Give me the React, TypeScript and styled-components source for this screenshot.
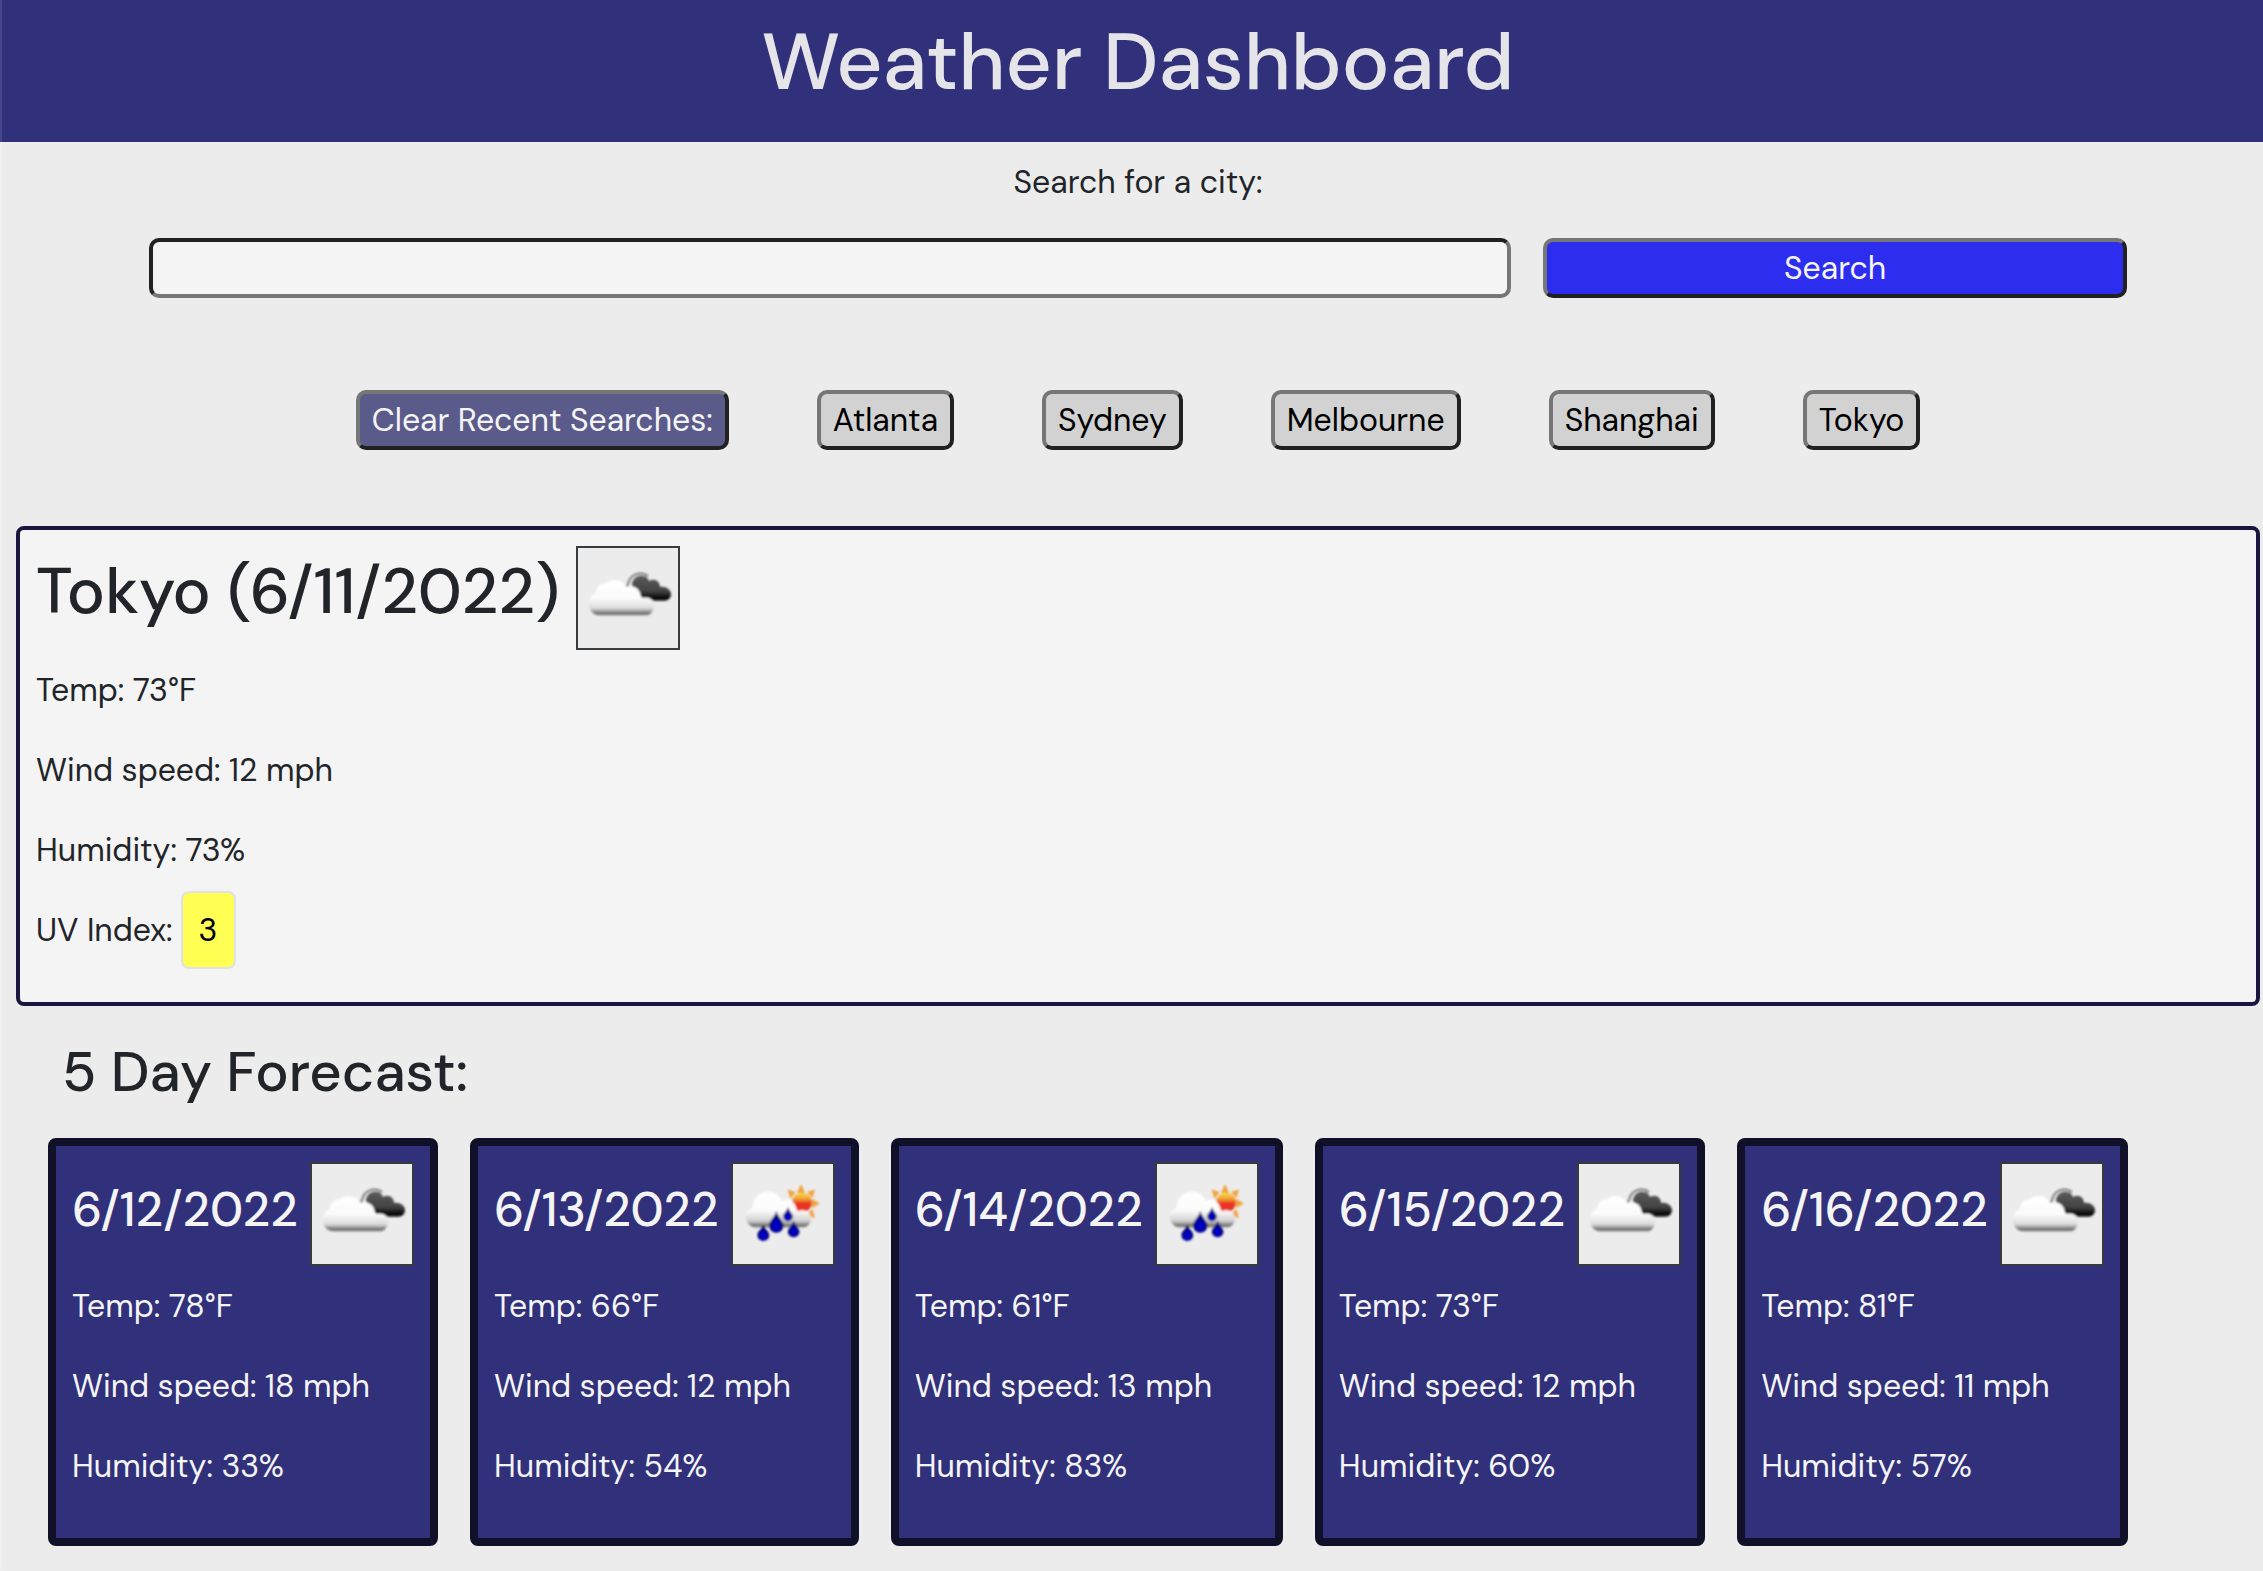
import React from "react";
import styled, { createGlobalStyle } from "styled-components";

const color = {
  navy: "#31307a",
  page: "#ececec",
  panel: "#f4f4f4",
  text: "#212529",
  light: "#f4f4f4",
  bevelDark: "#212121",
  bevelLight: "#767676",
};

const GlobalStyle = createGlobalStyle`
  *, *::before, *::after { box-sizing: border-box; }
  body {
    margin: 0;
    background: ${color.page};
    color: ${color.text};
    font-family: "DM Sans", Inter, "Open Sans", sans-serif;
    font-size: 32px;
    line-height: 48px;
  }
  h1, h2, h3, p { margin: 0; font-weight: 500; }
  button, input { font: inherit; }
`;

const Header = styled.header`
  padding: 14px 0 32px 11px;
  border-left: 2px solid #46458a;
  background: ${color.navy};
  text-align: center;
`;

const PageTitle = styled.h1`
  color: #e5e4e9;
  font-size: 80px;
  line-height: 96px;
`;

const Main = styled.main`
  padding: 16px 3px 24px 14px;
  border-left: 2px solid #f0f0f0;
`;

const SearchForm = styled.form`
  display: grid;
  grid-template-columns: 7fr 3fr;
  gap: 32px;
  margin: 0 133px;
`;

const SearchLabel = styled.label`
  grid-column: 1 / -1;
  text-align: center;
`;

const SearchInput = styled.input`
  width: 100%;
  min-width: 0;
  height: 60px;
  padding: 0 12px;
  border: 4px solid;
  border-color: ${color.bevelDark} ${color.bevelLight} ${color.bevelLight} ${color.bevelDark};
  border-radius: 10px;
  background: ${color.panel};
  color: ${color.text};
`;

const Button = styled.button<{ $tone: "primary" | "muted" | "plain" }>`
  height: 60px;
  padding: 0 12px;
  border: 4px solid;
  border-color: ${color.bevelLight} ${color.bevelDark} ${color.bevelDark} ${color.bevelLight};
  border-radius: 10px;
  background: ${(p) => ({ primary: "#2d2df0", muted: "#5b5b8b", plain: "#d2d2d2" })[p.$tone]};
  color: ${(p) => (p.$tone === "plain" ? "#000" : color.light)};
  line-height: 52px;
  cursor: pointer;
`;

const RecentSearches = styled.nav`
  display: flex;
  flex-wrap: wrap;
  justify-content: center;
  gap: 24px 88px;
  margin: 92px 0 76px;
`;

const CurrentPanel = styled.section`
  padding: 16px 16px 48px;
  border: 4px solid #19173f;
  border-radius: 8px;
  background: ${color.panel};
`;

const PanelHeader = styled.div`
  display: flex;
  align-items: flex-start;
  gap: 16px;
  margin-bottom: 16px;
`;

const CityTitle = styled.h2`
  font-size: 64px;
  line-height: 92px;
  white-space: nowrap;
`;

const IconFrame = styled.svg`
  flex: none;
  width: 104px;
  height: 104px;
  border: 2px solid #373b3e;
  background: ${color.page};
`;

const Readings = styled.div`
  display: flex;
  flex-direction: column;
  gap: 32px;
`;

const Reading = styled.p`
  display: flex;
  align-items: center;
  gap: 8px;
  height: 48px;
  font-weight: 400;
  white-space: nowrap;
`;

const UvBadge = styled.span`
  padding: 13px 16px;
  border: 2px solid #dee2e6;
  border-radius: 8px;
  background: #ffff54;
  color: #000;
`;

const Forecast = styled.section`
  margin: 32px 32px 0;
`;

const ForecastTitle = styled.h2`
  margin: 0 0 32px;
  padding-left: 14px;
  font-size: 56px;
  line-height: 68px;
`;

const CardRow = styled.div`
  display: flex;
  flex-wrap: wrap;
  gap: 32px;
`;

const Card = styled.article`
  padding: 16px 16px 48px;
  border: 8px solid #101028;
  border-radius: 8px;
  background: ${color.navy};
  color: ${color.light};
`;

const CardHeader = styled(PanelHeader)`
  gap: 12px;
`;

const CardDate = styled.h3`
  font-size: 48px;
  line-height: 96px;
`;

function CloudsIcon() {
  const id = React.useId();
  return (
    <IconFrame viewBox="0 0 100 100" role="img" aria-label="Broken clouds">
      <defs>
        <linearGradient id={`${id}w`} gradientUnits="userSpaceOnUse" x1="0" y1="32" x2="0" y2="68">
          <stop offset="0" stopColor="#fff" />
          <stop offset="0.5" stopColor="#fbfbfb" />
          <stop offset="0.78" stopColor="#dcdcdc" />
          <stop offset="0.86" stopColor="#a5a5a5" />
          <stop offset="0.93" stopColor="#6c6c6c" />
          <stop offset="1" stopColor="#a8a8a8" />
        </linearGradient>
        <linearGradient id={`${id}d`} gradientUnits="userSpaceOnUse" x1="0" y1="28" x2="0" y2="53">
          <stop offset="0" stopColor="#5a5a5a" />
          <stop offset="0.6" stopColor="#444" />
          <stop offset="0.9" stopColor="#050505" />
          <stop offset="1" stopColor="#444" />
        </linearGradient>
        <filter id={`${id}s`} x="-10%" y="-10%" width="120%" height="120%">
          <feGaussianBlur stdDeviation="0.9" />
        </filter>
      </defs>
      <g filter={`url(#${id}s)`}>
        <path d="M47 39C50 39 50 36 51 33C54 26 63 23 70 28" fill="none" stroke="#858585" strokeWidth="2.2" />
        <path
          d="M54 36C55 29 61 27 65 28C68 28 70 30 71 33C76 30 82 33 82 39C88 38 93 42 93 46C93 50 90 53 86 53H68L55 41Z"
          fill={`url(#${id}d)`}
        />
        <path
          d="M21 67.5C15 67 11 62 11 56C11 51 13 47 18 45C18 39 23 35 28 35C32 31 41 31 45 35C48 38 48 39 51 39C58 37 63 43 63 50C70 48 76 51 76 57C76 62 73 67 69 67.5Z"
          fill={`url(#${id}w)`}
        />
      </g>
    </IconFrame>
  );
}

const SUN_RAYS = [
  "M64 29L68 20L72 29Z",
  "M57.5 35L54.5 25.5L62.5 28Z",
  "M74 28L82 25.5L79.5 34Z",
  "M79 35L87 39.5L79 44Z",
  "M79.5 45L82 54.5L73.5 50.5Z",
];

const RAINDROPS = [
  "M43.3 47C44.8 53 50.6 57 50.6 61.5A7.3 7.3 0 0 1 36 61.5C36 57 42 53 43.3 47Z",
  "M55 43C56 47 59.8 49.5 59.8 52.5A4.8 4.8 0 0 1 50.2 52.5C50.2 49.5 54 47 55 43Z",
  "M30.3 60C31.500 65 36.2 67.5 36.2 71.200A5.9 5.9 0 0 1 24.4 71.200C24.4 67.5 29 65 30.3 60Z",
  "M60.700 56.500C62 61 66.5 64 66.5 68A5.9 5.9 0 0 1 54.8 68C54.8 64 59.500 61 60.700 56.500Z",
];

function SunRainIcon() {
  const id = React.useId();
  return (
    <IconFrame viewBox="0 0 100 100" role="img" aria-label="Rain with sun">
      <defs>
        <linearGradient id={`${id}s`} x1="0" y1="0" x2="0" y2="1">
          <stop offset="0.08" stopColor="#f8d24c" />
          <stop offset="0.35" stopColor="#f0962f" />
          <stop offset="0.55" stopColor="#ea3323" />
          <stop offset="1" stopColor="#e8301f" />
        </linearGradient>
        <linearGradient id={`${id}w`} gradientUnits="userSpaceOnUse" x1="0" y1="28" x2="0" y2="64">
          <stop offset="0" stopColor="#fff" />
          <stop offset="0.5" stopColor="#fcfcfc" />
          <stop offset="0.8" stopColor="#d2d2d2" />
          <stop offset="0.94" stopColor="#6e6e6e" />
          <stop offset="1" stopColor="#aaa" />
        </linearGradient>
        <radialGradient id={`${id}r`} cx="0.5" cy="0.68" r="0.55">
          <stop offset="0" stopColor="#0000d8" />
          <stop offset="0.45" stopColor="#0000b0" />
          <stop offset="1" stopColor="#00004c" />
        </radialGradient>
        <filter id={`${id}b`} x="-10%" y="-10%" width="120%" height="120%">
          <feGaussianBlur stdDeviation="0.8" />
        </filter>
      </defs>
      <g filter={`url(#${id}b)`}>
        {SUN_RAYS.map((d) => (
          <path key={d} d={d} fill="#f0a33c" />
        ))}
        <circle cx="69" cy="38.500" r="10" fill={`url(#${id}s)`} />
        <path
          d="M21 63.500C16 62 12.500 57 12.500 52C13 48 17 46 20 43C20 35 25 28 34 28C41 27 46 31 49 37C55 34 60 36 62.500 42C64 46 64 48 67 46.500C74 45 78 50 78 55C78 59 75 63 70 63.500Z"
          fill={`url(#${id}w)`}
        />
        {RAINDROPS.map((d) => (
          <path key={d} d={d} fill={`url(#${id}r)`} />
        ))}
      </g>
    </IconFrame>
  );
}

const cities = ["Atlanta", "Sydney", "Melbourne", "Shanghai", "Tokyo"];

const forecast = [
  { date: "6/12/2022", Icon: CloudsIcon, temp: 78, wind: 18, humidity: 33 },
  { date: "6/13/2022", Icon: SunRainIcon, temp: 66, wind: 12, humidity: 54 },
  { date: "6/14/2022", Icon: SunRainIcon, temp: 61, wind: 13, humidity: 83 },
  { date: "6/15/2022", Icon: CloudsIcon, temp: 73, wind: 12, humidity: 60 },
  { date: "6/16/2022", Icon: CloudsIcon, temp: 81, wind: 11, humidity: 57 },
];

export default function App() {
  return (
    <>
      <GlobalStyle />
      <Header>
        <PageTitle>Weather Dashboard</PageTitle>
      </Header>
      <Main>
        <SearchForm onSubmit={(e) => e.preventDefault()}>
          <SearchLabel htmlFor="city">Search for a city:</SearchLabel>
          <SearchInput id="city" type="text" />
          <Button $tone="primary" type="submit">
            Search
          </Button>
        </SearchForm>

        <RecentSearches aria-label="Recent searches">
          <Button $tone="muted" type="button">
            Clear Recent Searches:
          </Button>
          {cities.map((city) => (
            <Button key={city} $tone="plain" type="button">
              {city}
            </Button>
          ))}
        </RecentSearches>

        <CurrentPanel>
          <PanelHeader>
            <CityTitle>Tokyo (6/11/2022)</CityTitle>
            <CloudsIcon />
          </PanelHeader>
          <Readings>
            <Reading>Temp: 73°F</Reading>
            <Reading>Wind speed: 12 mph</Reading>
            <Reading>Humidity: 73%</Reading>
            <Reading>
              UV Index: <UvBadge>3</UvBadge>
            </Reading>
          </Readings>
        </CurrentPanel>

        <Forecast>
          <ForecastTitle>5 Day Forecast:</ForecastTitle>
          <CardRow>
            {forecast.map(({ date, Icon, temp, wind, humidity }) => (
              <Card key={date}>
                <CardHeader>
                  <CardDate>{date}</CardDate>
                  <Icon />
                </CardHeader>
                <Readings>
                  <Reading>Temp: {temp}°F</Reading>
                  <Reading>Wind speed: {wind} mph</Reading>
                  <Reading>Humidity: {humidity}%</Reading>
                </Readings>
              </Card>
            ))}
          </CardRow>
        </Forecast>
      </Main>
    </>
  );
}
